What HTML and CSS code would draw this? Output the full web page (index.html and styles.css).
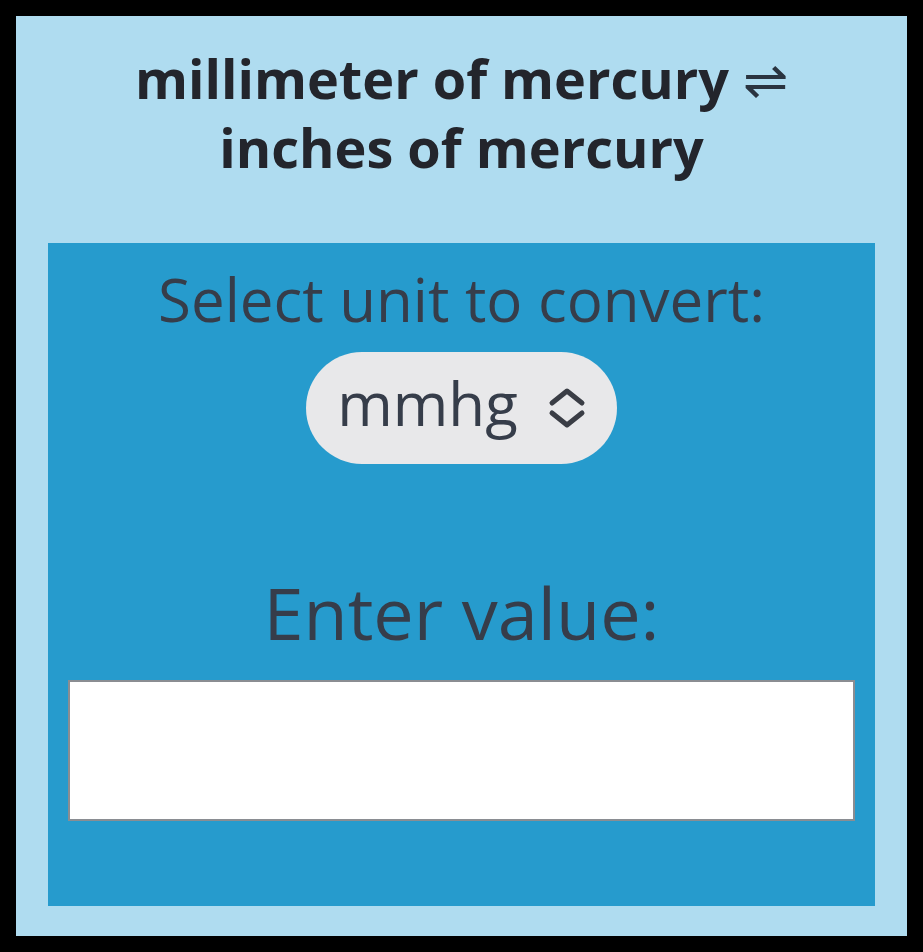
FILE: index.html
```html
<!DOCTYPE html>
<html>
<head lang="en">
    <meta charset="UTF-8">
    <title>mmhg to inhg</title>
    <link rel="stylesheet" href="styles.css">
</head>
<body>
<div class="panel">
    <h1 class="title">millimeter of mercury <span class="swap">&#8652;</span><br>inches of mercury</h1>
    <div class="box">
        <p class="label">Select unit to convert:</p>
        <div class="select">
            <span>mmhg</span>
            <svg class="arrows" width="38" height="44" viewBox="0 0 38 44">
                <path d="M4 17 L19 5 L34 17" fill="none" stroke="#3a3d45" stroke-width="5" stroke-linecap="round" stroke-linejoin="round"/>
                <path d="M4 27 L19 39 L34 27" fill="none" stroke="#3a3d45" stroke-width="5" stroke-linecap="round" stroke-linejoin="round"/>
            </svg>
        </div>
        <p class="label big">Enter value:</p>
        <input class="value" type="text">
    </div>
</div>
</body>
</html>
```

FILE: styles.css
```css
* {
    margin: 0;
    padding: 0;
    box-sizing: border-box;
}

body {
    background-color: #000;
    padding: 16px;
    font-family: "Open Sans", "Liberation Sans", sans-serif;
}

.panel {
    background-color: #afdcf0;
    height: 920px;
    padding: 0 32px 30px;
    display: flex;
    flex-direction: column;
}

.title {
    font-size: 54px;
    font-weight: 700;
    line-height: 69px;
    color: #23252c;
    text-align: center;
    padding-top: 28px;
    height: 227px;
}

.swap {
    font-weight: 400;
    color: #2a3440;
}

.box {
    flex: 1;
    background-color: #269bcd;
    padding: 0 20px;
    display: flex;
    flex-direction: column;
    align-items: center;
}

.label {
    color: #363d4a;
    font-size: 60px;
    line-height: 70px;
    margin-top: 21px;
}

.select {
    margin-top: 18px;
    height: 112px;
    width: 311px;
    border-radius: 56px;
    background-color: #e8e8ea;
    display: flex;
    align-items: center;
    justify-content: center;
    gap: 30px;
    font-size: 60px;
    color: #363d4a;
}

.select span {
    margin-top: -10px;
}

.label.big {
    font-size: 72px;
    line-height: 80px;
    margin-top: 108px;
}

.value {
    margin-top: 28px;
    width: 100%;
    height: 141px;
    background-color: #fff;
    border: 2px solid #8a8d92;
}
```
